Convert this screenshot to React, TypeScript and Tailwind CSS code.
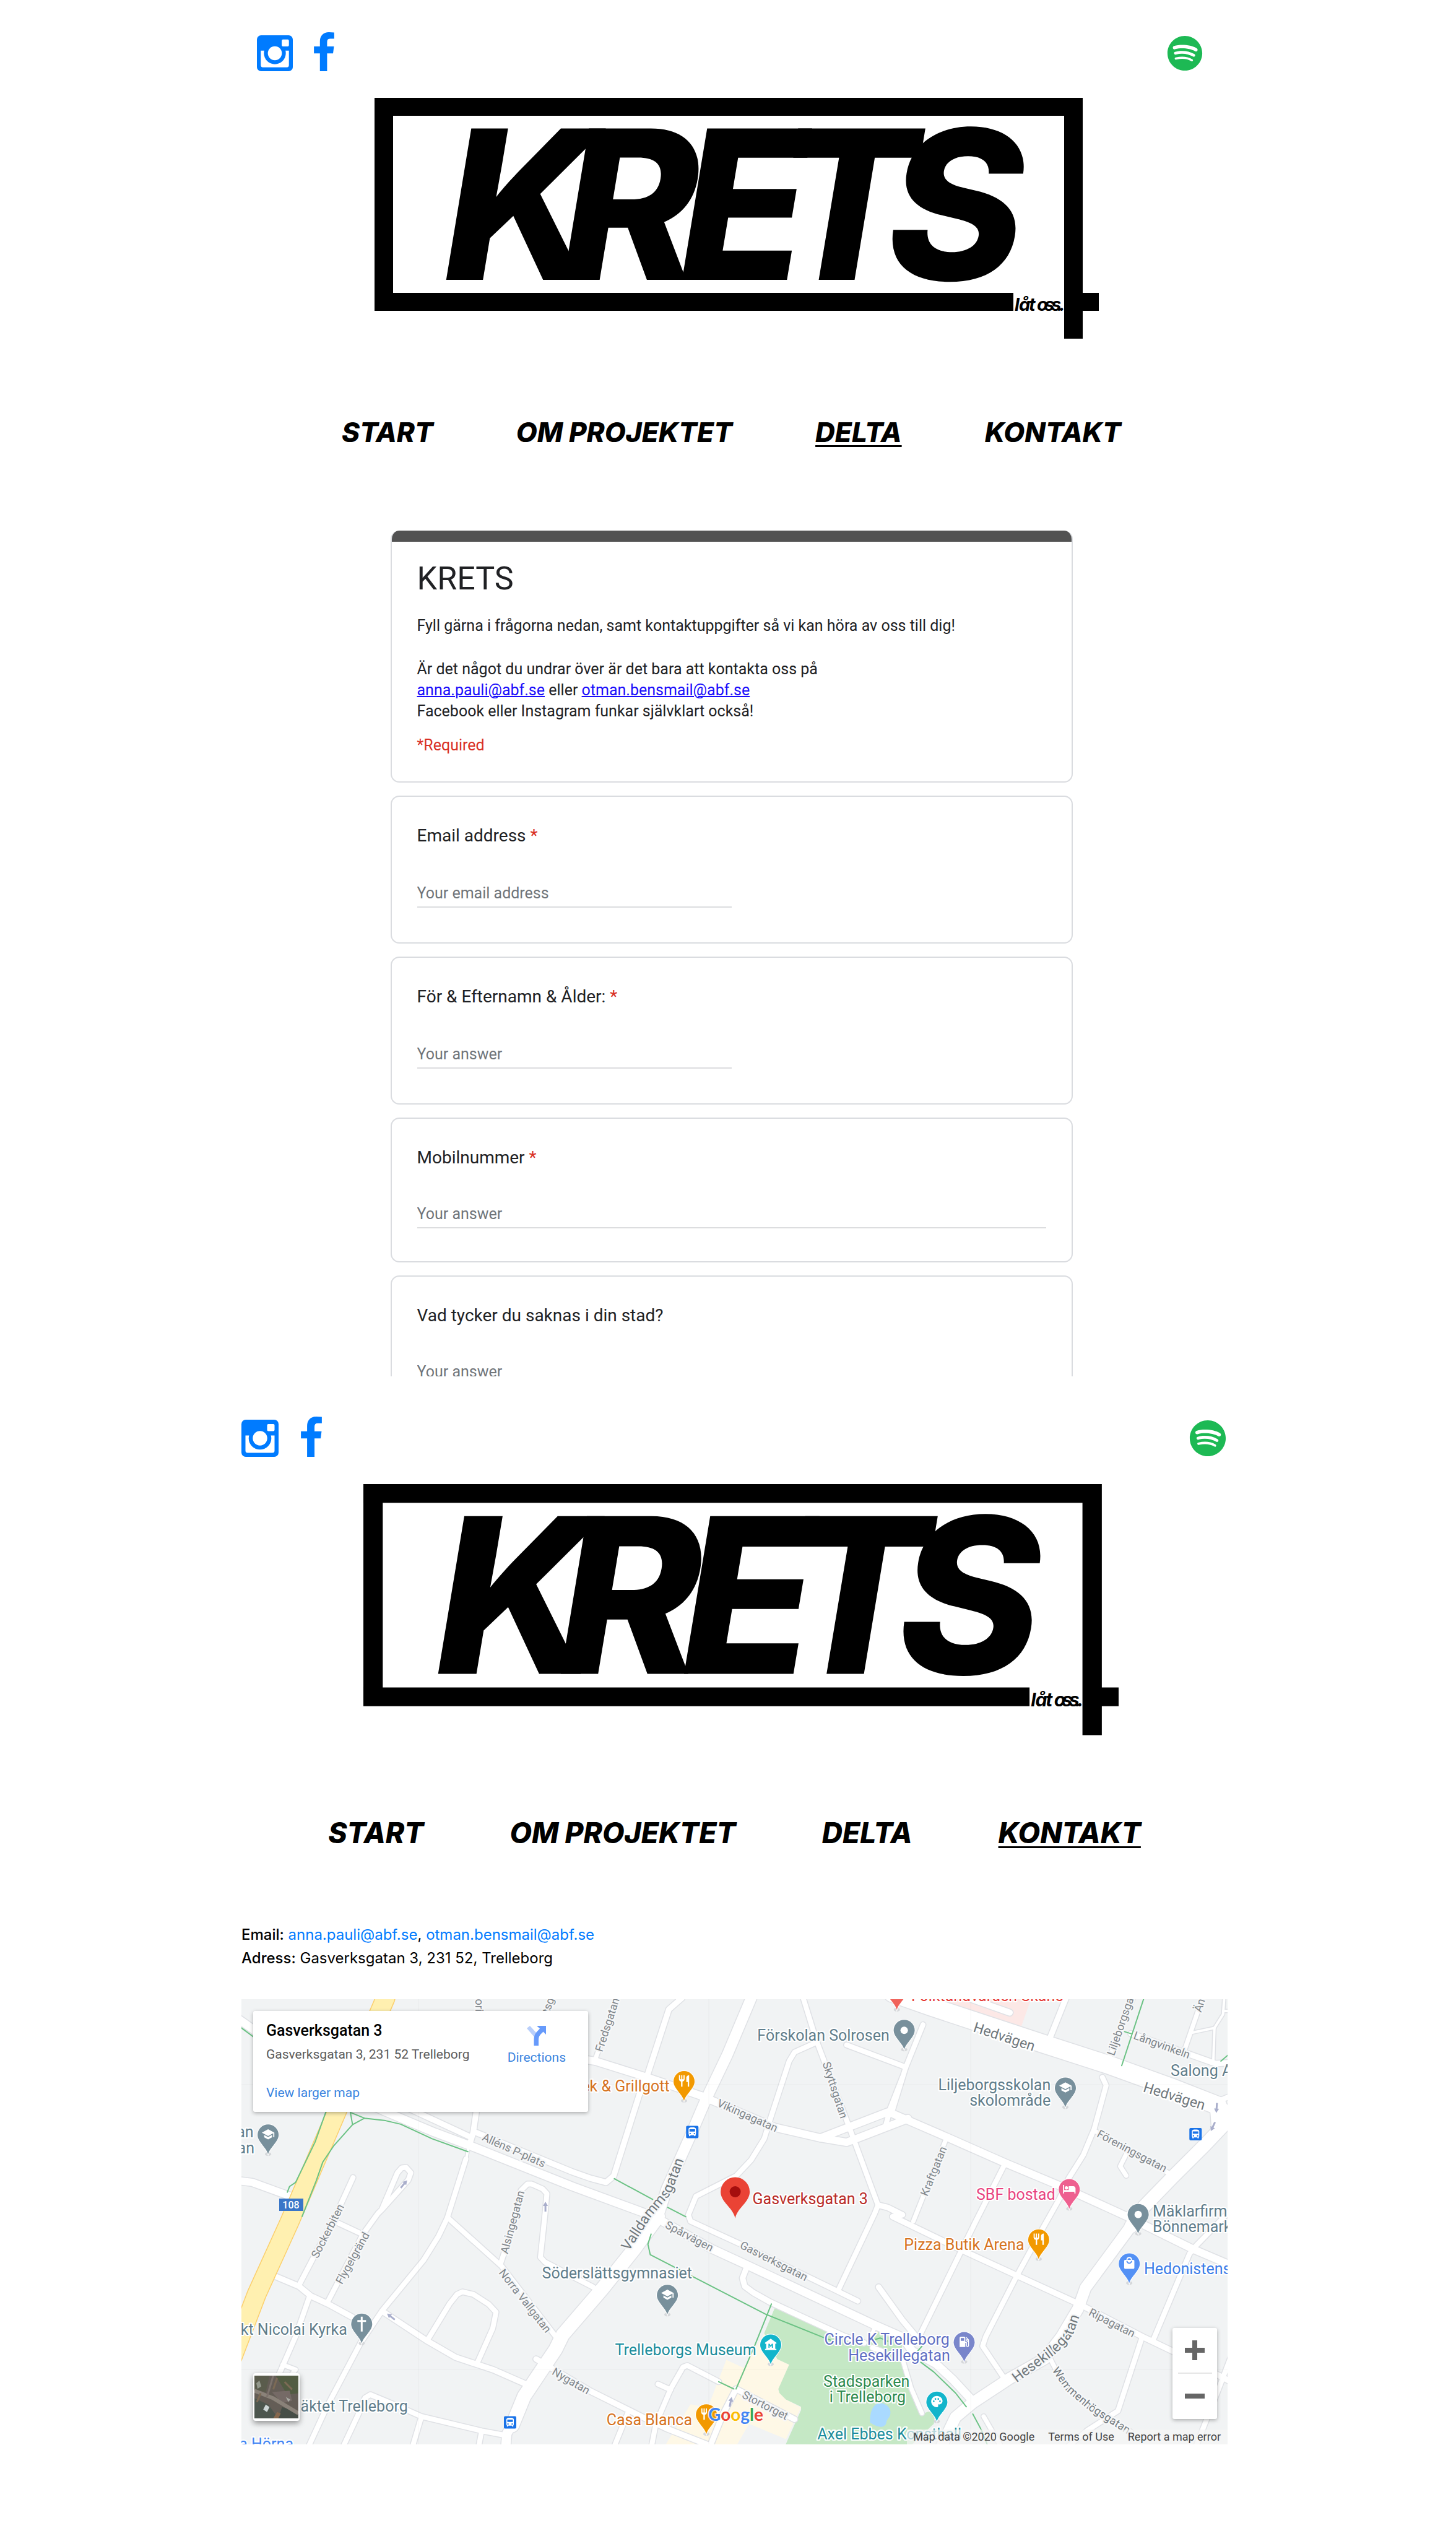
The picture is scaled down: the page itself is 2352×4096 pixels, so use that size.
import React, { useId } from "react";
import {
  MdDirectionsBus,
  MdLocalGasStation,
  MdLocalHotel,
  MdLocalMall,
  MdMuseum,
  MdPalette,
  MdRestaurant,
  MdSchool,
} from "react-icons/md";
import { FaSpotify } from "react-icons/fa";

/* ---------- Brand ---------- */

function InstagramIcon({ className }: { className: string }) {
  return (
    <svg viewBox="0 0 60 60" className={className} aria-hidden="true">
      <rect width="60" height="60" rx="7" fill="#007bff" />
      <path d="M6.500 25.500H53.500V50a3.500 3.500 0 0 1-3.500 3.500H10A3.500 3.500 0 0 1 6.500 50Z" fill="#fff" />
      <circle cx="30" cy="30" r="18.300" fill="#007bff" />
      <circle cx="30" cy="30" r="11.700" fill="#fff" />
      <rect x="41.500" y="7" width="12" height="11.500" rx="2" fill="#fff" />
    </svg>
  );
}

function FacebookIcon({ className }: { className: string }) {
  return (
    <svg viewBox="95 0 864 1664" className={className} aria-hidden="true">
      <path
        fill="#007bff"
        d="M959 12v264h-157q-86 0-116 36t-30 108v189h293l-39 296h-254v759h-306v-759h-255v-296h255v-218q0-186 104-288.500t277-102.500q147 0 228 12z"
      />
    </svg>
  );
}

function Logo({ className }: { className: string }) {
  return (
    <svg viewBox="0 0 1170 389" className={className} role="img" aria-label="KRETS låt oss..">
      <path d="M0 0H1144V315H1170V344H1144V389H1114V29H30V315H1032V344H0Z" fill="#000" />
      <text
        x="112 302 493 648 828"
        y="294"
        fontSize="336"
        className="font-['Inter',sans-serif] font-extrabold italic"
      >
        KRETS
      </text>
      <text
        x="1034 1041 1057 1064 1070 1082 1093 1102 1106"
        y="344"
        fontSize="29"
        className="font-['Inter',sans-serif] font-bold italic"
      >
        låt oss..
      </text>
    </svg>
  );
}

function SocialBar({ size }: { size: "sm" | "lg" }) {
  const lg = size === "lg";
  return (
    <div className={lg ? "flex h-[65px] items-end justify-between" : "flex h-[63px] items-end justify-between pr-[5px]"}>
      <div className={lg ? "flex items-end gap-[36px]" : "flex items-end gap-[34px]"}>
        <a href="#instagram" aria-label="Instagram">
          <InstagramIcon className={lg ? "block size-[60px]" : "block size-[58px]"} />
        </a>
        <a href="#facebook" aria-label="Facebook">
          <FacebookIcon className={lg ? "block h-[65px] w-[34px]" : "block h-[63px] w-[33px]"} />
        </a>
      </div>
      <a href="#spotify" aria-label="Spotify" className={lg ? "block pr-[2px]" : "block"}>
        <FaSpotify className={lg ? "size-[60px] text-[#1db954]" : "size-[58px] text-[#1db954]"} />
      </a>
    </div>
  );
}

const PAGES = ["START", "OM PROJEKTET", "DELTA", "KONTAKT"];

function Nav({ active, className }: { active: string; className: string }) {
  return (
    <nav className={className}>
      {PAGES.map((p) => (
        <a
          key={p}
          href={"#" + p.toLowerCase().replace(" ", "-")}
          className={
            p === active
              ? "whitespace-nowrap underline decoration-[3px] underline-offset-[5px] [text-decoration-skip-ink:none]"
              : "whitespace-nowrap"
          }
        >
          {p}
        </a>
      ))}
    </nav>
  );
}

/* ---------- Form ---------- */

function Question({
  label,
  placeholder,
  required,
  long,
}: {
  label: string;
  placeholder: string;
  required?: boolean;
  long?: boolean;
}) {
  const id = useId();
  return (
    <div
      className={
        long
          ? "rounded-[14px] border-2 border-[#dadce0] px-[41px] pt-[43px] pb-[53px]"
          : "rounded-[14px] border-2 border-[#dadce0] px-[41px] pt-[43px] pb-[56px]"
      }
    >
      <label htmlFor={id} className="block text-[28px] leading-[40px] text-[#202124]">
        {label}
        {required && <span className="text-[#d93025]"> *</span>}
      </label>
      <input
        id={id}
        type="text"
        placeholder={placeholder}
        className={
          long
            ? "mt-[53px] block h-[41px] w-full border-b-2 border-[#dcdddf] pb-[5px] text-[25px] leading-[34px] outline-none placeholder:text-[#70757a]"
            : "mt-[55px] block h-[41px] w-1/2 border-b-2 border-[#dcdddf] pb-[5px] text-[25px] leading-[34px] outline-none placeholder:text-[#70757a]"
        }
      />
    </div>
  );
}

function SignupForm() {
  return (
    <form className="mx-auto flex w-full max-w-[1102px] flex-col gap-[21px] font-['Roboto',sans-serif]">
      <div className="overflow-hidden rounded-[14px] border-2 border-t-0 border-[#dadce0]">
        <div className="-mx-[2px] h-[18px] bg-[#525252]" />
        <div className="px-[41px] pt-[28px] pb-[41px] text-[25px] leading-[34px] text-[#202124]">
          <h1 className="text-[52px] leading-[64px]">KRETS</h1>
          <p className="mt-[27px]">Fyll gärna i frågorna nedan, samt kontaktuppgifter så vi kan höra av oss till dig!</p>
          <p className="mt-[36px]">
            Är det något du undrar över är det bara att kontakta oss på
            <br />
            <a href="mailto:anna.pauli@abf.se" className="text-[#1a0dfb] underline decoration-2">
              anna.pauli@abf.se
            </a>{" "}
            eller{" "}
            <a href="mailto:otman.bensmail@abf.se" className="text-[#1a0dfb] underline decoration-2">
              otman.bensmail@abf.se
            </a>
            <br />
            Facebook eller Instagram funkar självklart också!
          </p>
          <p className="mt-[21px] text-[#d93025]">*Required</p>
        </div>
      </div>
      <Question label="Email address" placeholder="Your email address" required />
      <Question label="För & Efternamn & Ålder:" placeholder="Your answer" required />
      <Question label="Mobilnummer" placeholder="Your answer" required long />
      <Question label="Vad tycker du saknas i din stad?" placeholder="Your answer" long />
    </form>
  );
}

/* ---------- Map ---------- */

/* Geometry is stored per map tile, in tile units; these are the tile origins. */
const TILES: Record<string, [number, number]> = {
  A: [-14, -15],
  B: [519, -15],
  C: [1052, -15],
  D: [-14, 346],
  E: [519, 346],
  F: [1052, 346],
};

function at(tile: string, x: number, y: number): [number, number] {
  const [ox, oy] = TILES[tile];
  return [Math.round((ox + x * 0.35) * 10) / 10, Math.round((oy + y * 0.2613) * 10) / 10];
}

/* "A 10,20 30,40 B 5,6" -> SVG path data, the letter switching tiles. */
function line(src: string): string {
  let tile = "A";
  const out: string[] = [];
  for (const tok of src.split(" ")) {
    if (TILES[tok]) {
      tile = tok;
      continue;
    }
    const [x, y] = tok.split(",").map(Number);
    out.push(at(tile, x, y).join(" "));
  }
  return "M" + out.join("L");
}

const ROADS: [number, string][] = [
  [13, "A 0,155 95,245 400,560 700,750 930,880 1090,960 1568,1215 B 370,1375 460,1430 E 690,220 860,325 1440,690 1568,765 F 90,850 200,930 280,1030 370,1160"],
  [9, "A 760,700 1090,905"],
  [9, "A 1120,880 1568,1125 B 130,1165 200,1190 235,1150 360,620 390,530 490,120 550,50"],
  [9, "A 1125,740 1110,880 1090,970"],
  [4, "A 1090,960 1078,1040"],
  [8, "A 1076,1045 990,1410 D 950,140 880,290 770,470 690,600 590,800 440,1180 350,1440"],
  [8, "D 995,30 1240,325 1490,760"],
  [8, "A 690,1350 760,1130 780,1100 800,1097 822,1130 810,1175 690,1355 D 670,0 600,130 435,555"],
  [8, "A 555,1160 480,1380 D 305,445"],
  [8, "D 480,55 600,130"],
  [9, "D 190,385 305,450 360,510 440,560 550,640"],
  [8, "D 355,510 290,760 215,990"],
  [7, "D 230,935 290,965 275,990"],
  [12, "A 30,1180 90,1190 265,1275"],
  [8, "D 1235,315 1300,50 A 1330,1240 1360,1200 1380,1200 1430,1230 1450,1260 1440,1400 D 1420,270 1440,300 1568,390 E 140,455"],
  [17, "B 870,50 760,400 660,680 590,900 480,1230 440,1400"],
  [22, "B 440,1400 E 330,220 180,470 0,750 D 1490,840 1345,1130 1290,1310"],
  [15, "D 1300,1280 1265,1360 1260,1440"],
  [9, "D 690,605 900,790 1030,890 1200,965 1345,1050"],
  [8, "D 900,780 1000,560 1035,500 1060,485 1110,500 1180,560 1215,610 1200,710 1130,920"],
  [8, "D 510,1440 580,1240 610,1140 635,1120 760,1190 870,1255 1150,1345 1260,1372"],
  [8, "D 870,1260 830,1440"],
  [8, "D 1148,1350 1135,1440"],
  [9, "D 1400,900 E 130,1100 370,1260 480,1330 670,1430"],
  [8, "E 300,1235 238,1440"],
  [8, "E 410,1440 430,1300 500,1080 555,950 575,940 720,1040"],
  [8, "E 440,1055 498,1090"],
  [9, "E 680,1440 740,1240 800,1085 1070,1272"],
  [7, "B 250,50 150,430"],
  [12, "B 100,430 150,440 400,545 640,655"],
  [12, "B 640,655 980,850 1190,915 1310,942 1345,925 1568,810 C 70,795"],
  [12, "B 1190,915 1500,755 C 0,765 250,910 520,1070 770,1210 1080,1400 F 1385,220 1560,320"],
  [8, "B 1110,50 1170,310 1320,840 1455,1330 E 1440,0 1270,480"],
  [9, "B 1455,1330 1500,1345 1568,1390 F 0,20 340,240 575,385 860,560 1150,760 1290,850 1560,1040"],
  [8, "B 1170,325 1070,385 1045,440 960,790 930,920 870,1050 800,1150 615,1275 580,1390 590,1430 E 820,190 1260,475 1362,542"],
  [9, "E 850,330 830,400 840,450 880,490 960,550 1300,760 1390,800"],
  [6, "E 1440,700 1420,780"],
  [8, "E 1430,830 1470,850"],
  [9, "E 1458,455 1568,660 F 120,780"],
  [8, "B 1310,340 1568,470 C 60,480"],
  [8, "C 140,215 60,480 0,740"],
  [8, "B 1505,755 1568,540"],
  [8, "B 1508,755 1490,840"],
  [29, "C 0,20 180,105 700,335 990,460 1300,610 1500,715"],
  [8, "C 1480,700 1570,650"],
  [21, "C 1510,720 1560,790 1440,960 1290,1160 1160,1340 F 1100,80"],
  [18, "C 1490,720 1500,880"],
  [18, "F 1110,60 890,460 855,590 780,760 700,900 540,1020 370,1170 290,1260 225,1440"],
  [9, "C 800,50 722,310"],
  [10, "C 330,40 540,140"],
  [7, "C 1110,50 990,450"],
  [7, "C 1430,50 1350,360"],
  [9, "C 1100,270 1490,455 1560,450"],
  [4, "C 1530,50 1525,150 1485,235 1480,440"],
  [4, "C 1380,265 1485,235"],
  [4, "C 1525,130 1570,130"],
  [8, "C 968,540 985,590 930,860 880,1020 810,1170 C 770,1290 690,1480 F 575,380 430,760 415,820 520,1030"],
  [7, "C 930,870 1290,1145"],
  [7, "C 1080,1010 1050,1090 1078,1148"],
  [7, "C 250,910 95,1430"],
  [8, "C 520,1070 380,1440 F 130,740"],
  [8, "F 1545,0 1480,90 1400,200 1370,250 1200,790"],
  [8, "F 1150,770 1040,1220 900,1340 810,1440"],
  [7, "F 720,880 790,1060 900,1190 1100,1350"],
  [8, "F 1560,890 1500,1100 1400,1440"],
  [7, "F 420,1255 500,1440"],
  [7, "F 50,920 85,1080 135,1235"],
];

const PATHS = [
  "A 40,235 95,290",
  "A 430,753 380,940 290,1190 262,1215 252,1250",
  "A 320,1400 385,1180 415,1065 465,965 553,833 543,757 608,793 705,808 775,830 920,920 1085,1000",
  "A 608,793 553,833",
  "B 238,1167 415,1295",
  "B 485,1345 568,1402",
  "E 408,128 393,190 404,255 940,625 1200,765 1240,785",
  "E 963,560 885,820 800,1085",
  "E 720,1040 790,1085",
  "E 1440,780 1465,770 1500,790",
  "C 1158,57 1057,468",
  "C 1070,258 1100,270",
  "C 1550,400 1515,440",
  "F 130,920 190,980 290,1110 340,1195",
  "F 370,1240 410,1340 440,1440",
  "F 135,820 110,860",
];

const SLATE = "#607d8b";
const SLATE_PIN = "#78909c";
const ORANGE = "#d6731f";
const ORANGE_PIN = "#f29900";
const TEAL = "#1c8d9c";
const TEAL_PIN = "#12b5cb";

type Anchor = "start" | "end";
const PLACES: [string, string, number, number, Anchor, string][] = [
  ["an", "A", 96, 912, "end", SLATE],
  ["an", "A", 100, 1010, "end", SLATE],
  ["ek & Grillgott", "B", 493, 628, "end", ORANGE],
  ["Förskolan Solrosen", "B", 1508, 312, "end", SLATE],
  ["Folktandvården Skåne", "C", 787, 68, "end", "#e53935"],
  ["Liljeborgsskolan", "C", 729, 620, "end", SLATE],
  ["skolområde", "C", 729, 716, "end", SLATE],
  ["Salong A", "C", 1283, 533, "start", SLATE],
  ["SBF bostad", "C", 750, 1296, "end", "#e8437f"],
  ["Mäklarfirm", "C", 1200, 1400, "start", SLATE],
  ["Bönnemark", "F", 1200, 115, "start", SLATE],
  ["Gasverksgatan 3", "B", 876, 1325, "start", "#b92b27"],
  ["Pizza Butik Arena", "F", 607, 225, "end", ORANGE],
  ["Hedonistens", "F", 1160, 375, "start", "#3b7de8"],
  ["kt Nicolai Kyrka", "D", 528, 748, "end", SLATE],
  ["äktet Trelleborg", "D", 313, 1226, "start", SLATE],
  ["a Hörna", "D", 280, 1458, "end", "#4285f4"],
  ["Söderslättsgymnasiet", "E", 597, 403, "end", SLATE],
  ["Trelleborgs Museum", "E", 893, 875, "end", TEAL],
  ["Circle K Trelleborg", "F", 262, 812, "end", "#5f6fc4"],
  ["Hesekillegatan", "F", 265, 910, "end", "#5f6fc4"],
  ["Stadsparken", "F", 78, 1072, "end", "#2e8b4f"],
  ["i Trelleborg", "F", 60, 1168, "end", "#2e8b4f"],
  ["Axel Ebbes Konsthall", "E", 1175, 1395, "start", TEAL],
  ["Casa Blanca", "E", 597, 1308, "end", ORANGE],
];

const STREETS: [string, string, number, number, number][] = [
  ["Alléns P-plats", "A", 1298, 990, 24],
  ["Sockerbiten", "A", 437, 1490, -63],
  ["Flygelgränd", "D", 552, 275, -61],
  ["Alsingegatan", "A", 1290, 1435, -75],
  ["Norra Vallgatan", "D", 1350, 540, 52],
  ["Nygatan", "D", 1562, 1035, 30],
  ["Fredsgatan", "B", 205, 215, -72],
  ["ori", "A", 1137, 95, 90],
  ["tsg", "A", 1455, 95, -72],
  ["Vikingagatan", "B", 853, 775, 24],
  ["Skyttsgatan", "B", 1258, 618, 72],
  ["Liljeborgsga", "C", 1050, 225, -71],
  ["Än", "C", 1415, 95, -72],
  ["Långvinkeln", "C", 1243, 340, 20],
  ["Föreningsgatan", "C", 1105, 995, 28],
  ["Kraftgatan", "C", 188, 1120, -68],
  ["Spårvägen", "E", 585, 140, 28],
  ["Gasverksgatan", "E", 975, 293, 27],
  ["Stortorget", "E", 935, 1185, 27],
  ["Ripagatan", "F", 1013, 675, 27],
];

const CURVED: [string, string, string, string][] = [
  ["valldamm", "Valldammsgatan", "E 305,235 410,20 B 500,1260 575,1000 600,900", "text-[23px]"],
  ["hesekille", "Hesekillegatan", "F 572,1048 760,860 832,750 872,600 890,540", "text-[23px]"],
  ["wemmen", "Wemmenhögsgatan", "F 735,970 800,1095 900,1210 1090,1370 1150,1420", "text-[18px]"],
];

const ARROWS: [string, number, number, number][] = [
  ["A", 790, 1200, 40],
  ["A", 1443, 1340, 0],
  ["D", 730, 638, -52],
  ["C", 1495, 730, 184],
  ["C", 1478, 845, 205],
  ["E", 775, 1165, 12],
];

function Pin({ tile, x, y, color, children }: { tile: string; x: number; y: number; color: string; children?: React.ReactNode }) {
  const [px, py] = at(tile, x, y);
  return (
    <g transform={`translate(${px} ${py})`}>
      <ellipse cx="0" cy="0" rx="5" ry="3" fill="#d5d7da" />
      <path
        d="M0 0C-3-11-17-20-17-31A17 17 0 0 1 17-31C17-20 3-11 0 0Z"
        fill={color}
        stroke="#fff"
        strokeWidth="2"
        paintOrder="stroke"
      />
      {children}
    </g>
  );
}

const GLYPH = { x: -11, y: -43, size: 22, color: "#fff" };
const dot = <circle cx="0" cy="-31" r="6" fill="#fff" />;

function BusStop({ tile, x, y }: { tile: string; x: number; y: number }) {
  const [px, py] = at(tile, x, y);
  return (
    <g transform={`translate(${px} ${py})`}>
      <rect x="-10" y="-10" width="20" height="20" rx="2" fill="#1a73e8" />
      <MdDirectionsBus x={-9} y={-9} size={18} color="#fff" />
    </g>
  );
}

function MapDrawing() {
  const roads = ROADS.map(([w, src]) => ({ w, d: line(src) }));
  const yellow = line("A 705,50 480,753 260,1440 D 110,500 -30,990");
  const [gx, gy] = at("B", 796, 1412);
  const [lx, ly] = at("E", 1467, 1247);
  return (
    <svg
      viewBox="0 0 1593 719"
      preserveAspectRatio="xMidYMid slice"
      className="block h-full w-full font-['Roboto',sans-serif]"
      role="img"
      aria-label="Karta över Trelleborg"
    >
      <rect width="1593" height="719" fill="#f1f3f4" />
      <path d={line("C 250,50 640,50 590,240 260,95") + "Z"} fill="#fce8e6" />
      <path
        d={line("E 930,740 990,900 1045,935 995,1095 1030,1150 1100,1200 1030,1395 860,1300 800,1440 470,1440 590,1180 670,1200 755,905 835,955") + "Z"}
        fill="#fef8e6"
      />
      <path
        d={line("E 980,580 1230,715 1390,800 1450,730 1568,800 F 40,860 50,920 135,1240 165,1225 195,1240 190,1300 80,1440 E 1025,1440 1100,1215 1100,1195 1030,1150 1000,1110 995,1085 1045,935 990,900 930,740") + "Z"}
        fill="#c5e8c5"
      />
      <path
        d={`M${lx - 4} ${ly - 19}C${lx + 4} ${ly - 22} ${lx + 17} ${ly - 14} ${lx + 16} ${ly - 4}C${lx + 16} ${ly + 5} ${lx + 10} ${ly + 4} ${lx + 9} ${ly + 14}C${lx + 4} ${ly + 23} ${lx - 8} ${ly + 18} ${lx - 17} ${ly + 12}C${lx - 17} ${ly - 4} ${lx - 14} ${ly - 15} ${lx - 4} ${ly - 19}Z`}
        fill="#aadaff"
      />
      <g fill="none" strokeLinecap="round" strokeLinejoin="round">
        {roads.map((r, i) => (
          <path key={i} d={r.d} stroke="#dfe1e5" strokeWidth={r.w + 3} />
        ))}
        {roads.map((r, i) => (
          <path key={i} d={r.d} stroke="#fff" strokeWidth={r.w} />
        ))}
        <path d={yellow} stroke="#fbcf6c" strokeWidth="32" />
        <path d={yellow} stroke="#fff0b0" strokeWidth="29" />
        {PATHS.map((p) => (
          <path key={p} d={line(p)} stroke="#6bc284" strokeWidth="2" />
        ))}
      </g>
      <path d="M286 0V719M755 0V719M1178 0V719M0 138H1593M0 598H1593" stroke="#000" strokeOpacity="0.03" />

      {ARROWS.map(([t, x, y, a]) => {
        const [px, py] = at(t, x, y);
        return (
          <path
            key={t + x}
            transform={`translate(${px} ${py}) rotate(${a})`}
            d="M-1.500 8V-1H-4L0-8L4-1H1.500V8Z"
            fill="#a9aecb"
          />
        );
      })}

      <g fill="#80868b" stroke="#f6f7f8" strokeWidth="5" strokeLinejoin="round" paintOrder="stroke">
        {STREETS.map(([name, t, x, y, a]) => {
          const [px, py] = at(t, x, y);
          return (
            <text
              key={name}
              transform={`translate(${px} ${py}) rotate(${a})`}
              textAnchor="middle"
              dominantBaseline="central"
              className="text-[18px]"
            >
              {name}
            </text>
          );
        })}
        {[
          ["Hedvägen", 515, 290, 18],
          ["Hedvägen", 1300, 658, 17],
        ].map(([name, x, y, a]) => {
          const [px, py] = at("C", Number(x), Number(y));
          return (
            <text
              key={String(x)}
              transform={`translate(${px} ${py}) rotate(${a})`}
              textAnchor="middle"
              dominantBaseline="central"
              stroke="#fff"
              fill="#70787d"
              className="text-[23px]"
            >
              {name}
            </text>
          );
        })}
        {CURVED.map(([id, name, src, cls]) => (
          <g key={id}>
            <path id={id} d={line(src)} fill="none" stroke="none" />
            <text className={cls} fill="#70787d">
              <textPath href={"#" + id}>{name}</textPath>
            </text>
          </g>
        ))}
      </g>

      <g stroke="#fff" strokeWidth="4" strokeLinejoin="round" paintOrder="stroke" className="text-[25px]">
        {PLACES.map(([name, t, x, y, anchor, color], i) => {
          const [px, py] = at(t, x, y);
          return (
            <text key={i} x={px} y={py} textAnchor={anchor} fill={color}>
              {name}
            </text>
          );
        })}
      </g>

      <BusStop tile="B" x={598} y={878} />
      <BusStop tile="C" x={1398} y={892} />
      <BusStop tile="D" x={1280} y={1292} />

      <Pin tile="A" x={163} y={1015} color={SLATE_PIN}><MdSchool {...GLYPH} /></Pin>
      <Pin tile="B" x={1542} y={122} color="#f0625a" />
      <Pin tile="B" x={560} y={685} color={ORANGE_PIN}><MdRestaurant {...GLYPH} /></Pin>
      <Pin tile="C" x={53} y={368} color={SLATE_PIN}>{dot}</Pin>
      <Pin tile="C" x={797} y={725} color={SLATE_PIN}><MdSchool {...GLYPH} /></Pin>
      <Pin tile="C" x={815} y={1353} color="#ee6090"><MdLocalHotel {...GLYPH} /></Pin>
      <Pin tile="F" x={1133} y={125} color={SLATE_PIN}>{dot}</Pin>
      <Pin tile="F" x={674} y={282} color={ORANGE_PIN}><MdRestaurant {...GLYPH} /></Pin>
      <Pin tile="F" x={1092} y={430} color="#5491f5"><MdLocalMall {...GLYPH} /></Pin>
      <Pin tile="D" x={595} y={803} color={SLATE_PIN}>
        <path d="M0-43V-19M-7-36H7" stroke="#fff" strokeWidth="3" />
      </Pin>
      <Pin tile="E" x={483} y={625} color={SLATE_PIN}><MdSchool {...GLYPH} /></Pin>
      <Pin tile="E" x={960} y={932} color={TEAL_PIN}><MdMuseum {...GLYPH} /></Pin>
      <Pin tile="F" x={330} y={917} color="#7986cb"><MdLocalGasStation {...GLYPH} /></Pin>
      <Pin tile="F" x={204} y={1285} color={TEAL_PIN}><MdPalette {...GLYPH} /></Pin>
      <Pin tile="E" x={663} y={1363} color={ORANGE_PIN}><MdRestaurant {...GLYPH} /></Pin>

      <g transform={`translate(${gx} ${gy})`}>
        <path d="M0 0C-3-17-23.500-26-23.500-43A23.500 23.500 0 0 1 23.500-43C23.500-26 3-17 0 0Z" fill="#ea4335" />
        <circle cx="0" cy="-43" r="9" fill="#a50e0e" />
      </g>

      <g>
        <rect x="61" y="322" width="39" height="20" fill="#3a76c8" />
        <text x="80" y="338" textAnchor="middle" fill="#fff" className="text-[16px] font-medium">
          108
        </text>
      </g>

      <text x="754" y="681" stroke="#fff" strokeWidth="3" strokeOpacity="0.7" paintOrder="stroke" className="font-['Lato',sans-serif] text-[28px] font-bold">
        <tspan fill="#4285f4">G</tspan>
        <tspan fill="#ea4335">o</tspan>
        <tspan fill="#fbbc05">o</tspan>
        <tspan fill="#4285f4">g</tspan>
        <tspan fill="#34a853">l</tspan>
        <tspan fill="#ea4335">e</tspan>
      </text>
    </svg>
  );
}

function SatelliteThumb() {
  return (
    <svg viewBox="0 0 70 68" preserveAspectRatio="none" className="block size-full" aria-hidden="true">
      <rect width="70" height="68" fill="#645d56" />
      <path d="M0 0H24L18 26L0 22Z" fill="#5a5c4c" />
      <path d="M34 0H70V28L52 30Z" fill="#525c42" />
      <path d="M0 36L22 46L38 68H0Z" fill="#4c564e" />
      <path d="M44 50L70 58V68H38Z" fill="#464e47" />
      <path d="M28 26L56 24L60 40L44 44Z" fill="#756a66" />
      <path d="M0 24L30 36L70 60" fill="none" stroke="#8a8279" strokeWidth="6" />
      <path d="M30 0L20 34" fill="none" stroke="#7d736d" strokeWidth="3" />
      <path d="M36 4L30 22M10 28L4 42M48 10L60 22" stroke="#7c6a55" strokeWidth="3" />
      <path d="M3 12L8 8L11 17L5 21Z" fill="#93988c" />
      <path d="M18 46L24 50L20 58L14 54Z" fill="#cdd6d6" />
      <path d="M50 34L57 38L54 42Z" fill="#a8aaa4" />
      <path d="M36 58L42 60L38 68H30Z" fill="#86684e" />
    </svg>
  );
}

function DirectionsIcon() {
  return (
    <svg viewBox="0 0 31 33" className="h-[33px] w-[31px]" aria-hidden="true">
      <path d="M0 5L5 1L16 13L12 19Z" fill="#b9cffb" />
      <path d="M16 1H31V15L26.500 10.500C21 16 19 18 19 24V33H11.500V23C11.500 14 16 11 21 5.500Z" fill="#669afb" />
    </svg>
  );
}

function MapEmbed() {
  return (
    <div className="relative h-[719px] w-full overflow-hidden font-['Roboto',sans-serif]">
      <MapDrawing />

      <div className="absolute top-[19px] left-[19px] flex h-[163px] w-[541px] justify-between rounded-[3px] bg-white pt-[17px] pr-[36px] pl-[21px] shadow-[0_2px_6px_rgba(0,0,0,0.3)]">
        <div className="flex flex-col items-start">
          <h2 className="text-[25px] leading-[30px] font-medium text-black">Gasverksgatan 3</h2>
          <p className="mt-[10px] text-[21px] leading-[26px] text-[#5b5b5b]">Gasverksgatan 3, 231 52 Trelleborg</p>
          <a href="#larger-map" className="mt-[36px] text-[21px] leading-[26px] text-[#3a84df]">
            View larger map
          </a>
        </div>
        <a href="#directions" className="flex flex-col items-center pt-[6px] text-[21px] leading-[26px] text-[#3a84df]">
          <DirectionsIcon />
          <span className="mt-[6px]">Directions</span>
        </a>
      </div>

      <button
        type="button"
        aria-label="Satellite view"
        className="absolute top-[604px] left-[19px] h-[77px] w-[75px] rounded-[4px] bg-white px-[2px] py-[4px] shadow-[0_4px_10px_rgba(0,0,0,0.4)]"
      >
        <SatelliteThumb />
      </button>

      <div className="absolute top-[531px] right-[17px] flex h-[147px] w-[72px] flex-col items-center rounded-[3px] bg-white shadow-[0_2px_6px_rgba(0,0,0,0.3)]">
        <button type="button" aria-label="Zoom in" className="flex w-full flex-1 items-center justify-center">
          <svg viewBox="0 0 32 32" className="size-[32px]" aria-hidden="true">
            <path d="M12 0H20V12H32V20H20V32H12V20H0V12H12Z" fill="#666" />
          </svg>
        </button>
        <div className="h-[2px] w-[55px] bg-[#e6e6e6]" />
        <button type="button" aria-label="Zoom out" className="flex w-full flex-1 items-center justify-center">
          <svg viewBox="0 0 32 8" className="h-[8px] w-[32px]" aria-hidden="true">
            <path d="M0 0H32V8H0Z" fill="#666" />
          </svg>
        </button>
      </div>

      <div className="absolute right-0 bottom-0 flex h-[24px] items-center gap-[22px] bg-[#f5f5f5]/70 pr-[11px] pl-[10px] text-[18px] leading-[24px] text-[#444]">
        <span>Map data ©2020 Google</span>
        <a href="#terms">Terms of Use</a>
        <a href="#report">Report a map error</a>
      </div>
    </div>
  );
}

/* ---------- Page ---------- */

export default function App() {
  return (
    <main className="min-h-screen bg-white font-['Inter',sans-serif] text-black">
      <section className="pt-[52px] pr-[404px] pl-[415px]">
        <SocialBar size="sm" />
        <Logo className="mt-[43px] ml-[190px] block w-[1170px]" />
        <Nav
          active="DELTA"
          className="mt-[124px] flex justify-center gap-[134px] text-[44px] leading-[54px] font-extrabold italic"
        />
        <div className="mt-[132px] h-[1366px] overflow-hidden">
          <SignupForm />
        </div>
      </section>

      <section className="pt-[65px] pr-[369px] pb-[148px] pl-[390px]">
        <SocialBar size="lg" />
        <Logo className="mt-[44px] ml-[197px] block w-[1220px]" />
        <Nav
          active="KONTAKT"
          className="mt-[129px] flex justify-center gap-[139px] text-[46px] leading-[57px] font-extrabold italic"
        />
        <address className="mt-[117px] text-[24px] leading-[38px] not-italic">
          <p>
            <span className="font-medium">Email:</span>{" "}
            <a href="mailto:anna.pauli@abf.se" className="text-[#007bff]">
              anna.pauli@abf.se
            </a>
            ,{" "}
            <a href="mailto:otman.bensmail@abf.se" className="text-[#007bff]">
              otman.bensmail@abf.se
            </a>
          </p>
          <p>
            <span className="font-medium">Adress:</span> Gasverksgatan 3, 231 52, Trelleborg
          </p>
        </address>
        <div className="mt-[47px]">
          <MapEmbed />
        </div>
      </section>
    </main>
  );
}
